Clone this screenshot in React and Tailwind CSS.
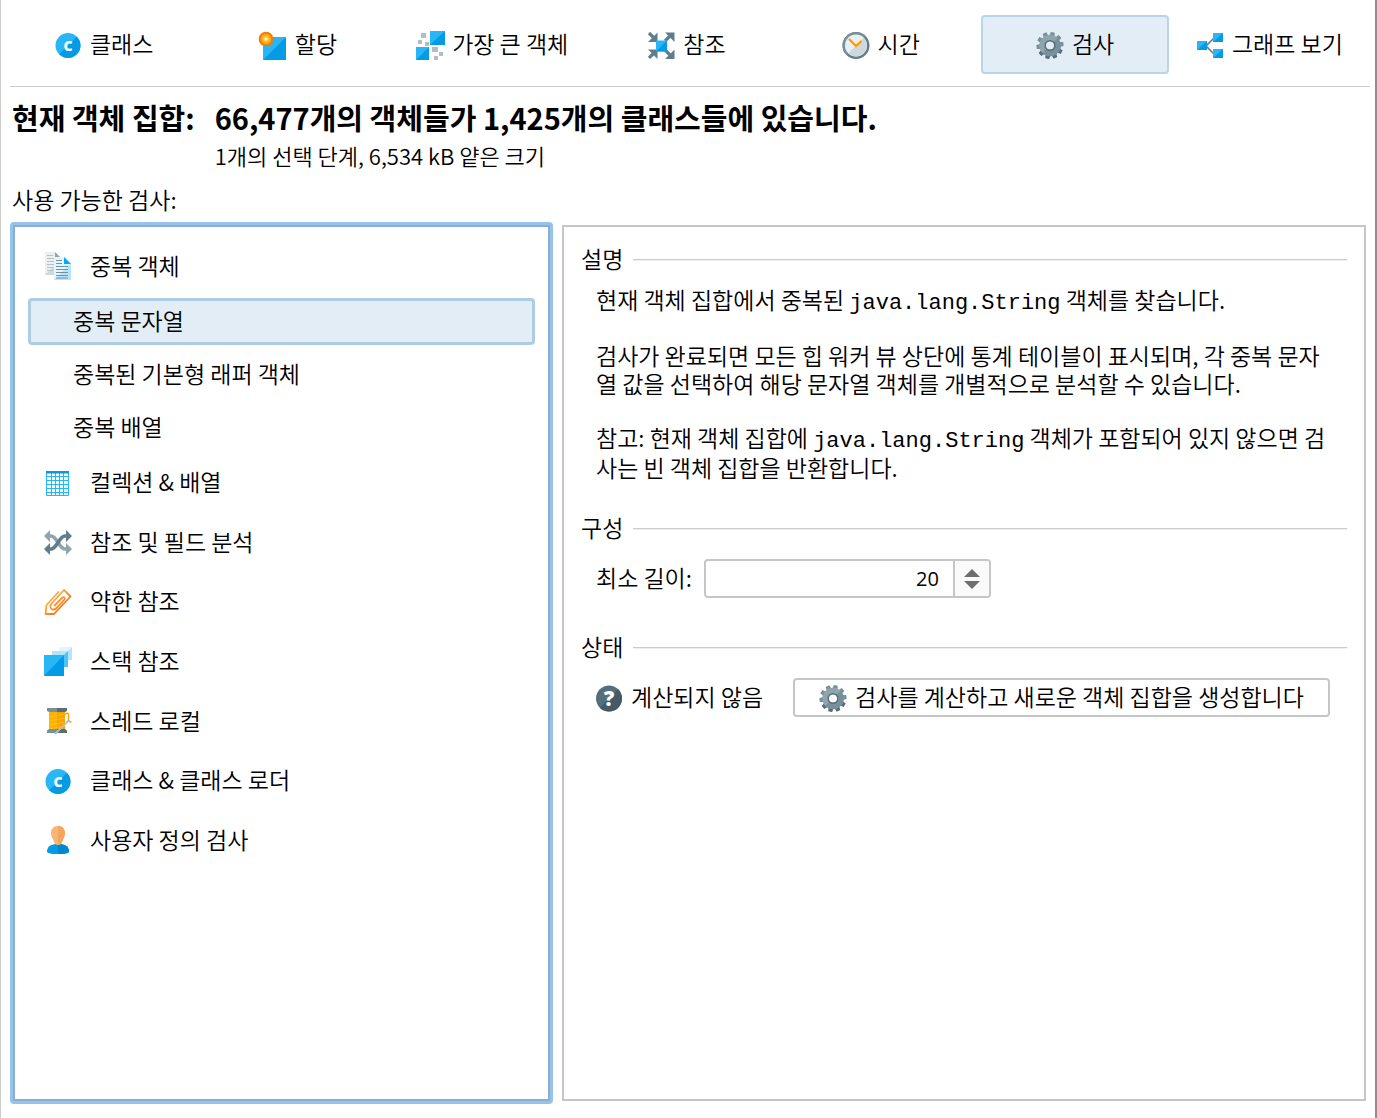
import React, { useState } from 'react';

const ClassIcon = () => (
  <svg className="h-7 w-7 shrink-0" viewBox="0 0 28 28" aria-hidden="true">
    <circle cx="14" cy="14.5" r="12.5" fill="#29b6f6" />
    <path d="M22.84 5.66A12.5 12.5 0 0 1 5.16 23.34z" fill="#039be5" />
    <text x="14" y="19.5" textAnchor="middle" fontFamily="Open Sans, sans-serif" fontWeight="800" fontSize="14" fill="#fff">C</text>
  </svg>
);

const AllocationIcon = () => (
  <svg className="h-7 w-7 shrink-0 overflow-visible" viewBox="0 0 28 28" aria-hidden="true">
    <path d="M4 6h23v23H4z" fill="#29b6f6" />
    <path d="M27 6v23H4z" fill="#039be5" />
    <circle cx="7" cy="8" r="7.3" fill="#f57c00" />
    <circle cx="7" cy="8" r="5.2" fill="#ffa726" />
    <circle cx="7" cy="8" r="3.2" fill="#ffca28" />
    <circle cx="7" cy="8" r="1.6" fill="#fff9c4" />
  </svg>
);

const BiggestIcon = () => (
  <svg className="h-7 w-7 shrink-0 overflow-visible" viewBox="0 0 28 28" aria-hidden="true">
    <path d="M14 0h15v14H14zM0 16h13v13H0z" fill="#29b6f6" />
    <path d="M29 0v14H14zM13 16v13H0z" fill="#039be5" />
    <path d="M5 2h5v5H5zM2 9h4v4H2zM9 11h4v4H9zM16 16h6v5h-6zM23 21h4v4h-4zM18 25h4v4h-4z" fill="#b0bec5" />
  </svg>
);

const ReferencesIcon = () => (
  <svg className="h-7 w-7 shrink-0" viewBox="0 0 28 28" aria-hidden="true">
    <path d="M2 2l6 6M2 27l6-6M18 10l6-6M18 19l6 6" stroke="#607d8b" strokeWidth="3.2" fill="none" />
    <path d="M10.5 1.5V11H1zM1 18.5h9.5V28zM18 1.5h9.5V11zM27.5 18.5V28H18z" fill="#607d8b" />
    <path d="M9 9.5h11v11H9z" fill="#29b6f6" />
    <path d="M20 9.5v11H9z" fill="#039be5" />
  </svg>
);

const ClockIcon = () => (
  <svg className="h-7 w-7 shrink-0" viewBox="0 0 28 28" aria-hidden="true">
    <circle cx="14" cy="14.5" r="13.5" fill="#607d8b" />
    <path d="M4.45 24.05A13.5 13.5 0 0 1 23.55 4.95z" fill="#78909c" />
    <circle cx="14" cy="14.5" r="11" fill="#eceff1" />
    <path d="M21.78 6.72A11 11 0 0 1 6.22 22.28z" fill="#cfd8dc" />
    <path d="M7 8l7 7 5.5-5" fill="none" stroke="#ff9800" strokeWidth="2.2" />
  </svg>
);

// ten blocky teeth around a ring
const teeth = [0, 36, 72, 108, 144, 180, 216, 252, 288, 324];

const GearIcon = () => (
  <svg className="h-7 w-7 shrink-0" viewBox="0 0 28 28" aria-hidden="true">
    {teeth.map((angle) => (
      <path
        key={angle}
        d="M11.3 6L12 1h4l.7 5z"
        fill={angle > 90 && angle < 250 ? '#546e7a' : '#78909c'}
        transform={`rotate(${angle + 12} 14 14.5)`}
      />
    ))}
    <circle cx="14" cy="14.5" r="7.5" fill="none" stroke="#90a4ae" strokeWidth="6.4" />
    <path d="M21.6 6.9A10.7 10.7 0 0 1 6.4 22.1l4.4-4.4A4.5 4.5 0 0 0 17.2 11.3z" fill="#78909c" />
    <circle cx="14" cy="14.5" r="4.8" fill="none" stroke="#546e7a" strokeWidth="1.5" />
  </svg>
);

const GraphIcon = () => (
  <svg className="h-7 w-7 shrink-0" viewBox="0 0 28 28" aria-hidden="true">
    <path d="M19 6l-9 9 9 9" fill="none" stroke="#607d8b" strokeWidth="1.6" />
    <path d="M17 2h10v9H17zM1 10h10v9H1zM17 18h10v9H17z" fill="#29b6f6" />
    <path d="M27 2v9H17zM11 10v9H1zM27 18v9H17z" fill="#039be5" />
  </svg>
);

const DuplicatesIcon = () => (
  <svg className="h-7 w-7 shrink-0" viewBox="0 0 28 28" aria-hidden="true">
    <path d="M1 0h10l5 5v18H1z" fill="#eceff1" />
    <path d="M16 8v15H1z" fill="#cfd8dc" />
    <path d="M11 0l5 5h-5z" fill="#90a4ae" />
    <path d="M3 3.5h6M3 6.5h7M3 9.5h7M3 12.5h7M3 15.5h6M3 18.5h6" stroke="#b8c3c8" />
    <path d="M10 5h11l6 6v17H10z" fill="#e1f5fe" />
    <path d="M27 11v17H10z" fill="#b3e5fc" />
    <path d="M20 5l7 7h-7z" fill="#03a9f4" />
    <path d="M12 8.5h6M12 11.5h6M12 14.5h12M12 17.5h12M12 20.5h12M12 23.5h12M12 26h12" stroke="#78909c" />
  </svg>
);

const TableIcon = () => (
  <svg className="h-7 w-7 shrink-0" viewBox="0 0 28 28" aria-hidden="true">
    <path d="M2 2h23v25H2z" fill="#fff" />
    <path d="M25 10v17H9z" fill="#e1f5fe" />
    <path d="M2.5 2v24.5h22V2M7.5 4v22M11.5 4v22M15.5 4v22M19.5 4v22M3 7.5h22M3 11.5h22M3 15.5h22M3 19.5h22M3 23.5h22" fill="none" stroke="#29b6f6" />
    <path d="M2 2h23v2.5H2z" fill="#039be5" />
  </svg>
);

const ShuffleIcon = () => (
  <svg className="h-7 w-7 shrink-0" viewBox="0 0 28 28" aria-hidden="true">
    <path d="M5 8h2c6 0 8 13 14 13h2" fill="none" stroke="#90a4ae" strokeWidth="3.6" />
    <path d="M5 21h2c6 0 8-13 14-13h2" fill="none" stroke="#607d8b" strokeWidth="3.6" />
    <path d="M0 8l6-6v12zM28 21l-6-6v12z" fill="#90a4ae" />
    <path d="M0 21l6-6v12zM28 8l-6-6v12z" fill="#607d8b" />
  </svg>
);

const ClipIcon = () => (
  <svg className="h-7 w-7 shrink-0" viewBox="0 0 28 28" aria-hidden="true">
    <defs>
      <linearGradient id="clip" x1="0" y1="0" x2="1" y2="1">
        <stop offset=".35" stopColor="#fbab3c" />
        <stop offset=".65" stopColor="#f57c1f" />
      </linearGradient>
    </defs>
    <path d="M14.5 4L2.5 17 1.5 26H10L26.5 8.5 20 2 8 15C5.5 17.5 6 21 8.5 21.5 10 22 11.5 21 12.5 20l8-8.5c1-1.500-.5-3-2-2L10.5 17.5" fill="none" stroke="url(#clip)" strokeWidth="1.8" strokeLinejoin="round" strokeLinecap="round" />
  </svg>
);

const StackIcon = () => (
  <svg className="h-7 w-7 shrink-0 overflow-visible" viewBox="0 0 28 28" aria-hidden="true">
    <path d="M15 0h13v13H15z" fill="#e1f5fe" />
    <path d="M28 0v13H15z" fill="#b3e5fc" />
    <path d="M8 4h16v16H8z" fill="#b3e5fc" />
    <path d="M24 4v16H8z" fill="#4fc3f7" />
    <path d="M0 8h20v21H0z" fill="#29b6f6" />
    <path d="M20 8v21H0z" fill="#039be5" />
  </svg>
);

const SpoolIcon = () => (
  <svg className="h-7 w-7 shrink-0" viewBox="0 0 28 28" aria-hidden="true">
    <path d="M5 4h16v19H5z" fill="#ffb300" />
    <path d="M13 4h8v19h-8z" fill="#ffa000" />
    <path d="M5 10l16-3M5 14l16-3M5 18l16-3M5 22l16-3" stroke="#ffca28" strokeWidth=".7" />
    <path d="M21 7c4-2 4 1 3.500 4s1 4 3 4" fill="none" stroke="#ffa000" strokeWidth="1.5" />
    <path d="M3 1h10v4H5L3 4z" fill="#78909c" />
    <path d="M13 1h10v3l-2 1h-8zM13 22h8l2 1.500V26H13z" fill="#546e7a" />
    <path d="M3 26v-2.500L5 22h8v4z" fill="#78909c" />
    <path d="M11 27L25 13" stroke="#b0bec5" strokeWidth="2" />
  </svg>
);

const UserIcon = () => (
  <svg className="h-7 w-7 shrink-0" viewBox="0 0 28 28" aria-hidden="true">
    <path d="M3 26c0-6 4-8 11-8s11 2 11 8c-3 3-19 3-22 0z" fill="#039be5" />
    <path d="M14 18c7 0 11 2 11 8-1.500 1.500-6 2.200-11 2.200z" fill="#0288d1" />
    <path d="M14 0c5 0 7 3.500 7 7s-2 6-3 9c-1 4-7 4-8 0C9 13 7 10.500 7 7s2-7 7-7z" fill="#f6b579" />
    <path d="M14 0c5 0 7 3.500 7 7s-2 6-3 9c-.5 2-2 3-4 3z" fill="#f5a65b" />
  </svg>
);

const HelpIcon = () => (
  <svg className="h-7 w-7 shrink-0" viewBox="0 0 28 28" aria-hidden="true">
    <circle cx="14" cy="14.5" r="13" fill="#546e7a" />
    <path d="M23.2 5.3A13 13 0 0 1 4.8 23.7z" fill="#455a64" />
    <text x="14" y="22" textAnchor="middle" fontFamily="Open Sans, sans-serif" fontWeight="800" fontSize="21" fill="#fff">?</text>
  </svg>
);

const tabs = [
  { id: 'classes', name: '클래스', Icon: ClassIcon },
  { id: 'allocations', name: '할당', Icon: AllocationIcon },
  { id: 'biggest', name: '가장 큰 객체', Icon: BiggestIcon },
  { id: 'references', name: '참조', Icon: ReferencesIcon },
  { id: 'time', name: '시간', Icon: ClockIcon },
  { id: 'inspections', name: '검사', Icon: GearIcon },
  { id: 'graph', name: '그래프 보기', Icon: GraphIcon },
];

const duplicates = [
  { id: 'strings', name: '중복 문자열' },
  { id: 'wrappers', name: '중복된 기본형 래퍼 객체' },
  { id: 'arrays', name: '중복 배열' },
];

const groups = [
  { id: 'collections', name: '컬렉션 & 배열', Icon: TableIcon },
  { id: 'fields', name: '참조 및 필드 분석', Icon: ShuffleIcon },
  { id: 'weak', name: '약한 참조', Icon: ClipIcon },
  { id: 'stack', name: '스택 참조', Icon: StackIcon },
  { id: 'threads', name: '스레드 로컬', Icon: SpoolIcon },
  { id: 'loaders', name: '클래스 & 클래스 로더', Icon: ClassIcon },
  { id: 'custom', name: '사용자 정의 검사', Icon: UserIcon },
];

const GroupButton = ({ name, Icon }) => (
  <button className="flex h-full w-full items-center gap-[18px] pl-4 text-left">
    <Icon />
    <span className="pb-[3px]">{name}</span>
  </button>
);

const SectionTitle = ({ children }) => (
  <div className="flex items-center gap-[10px]">
    <h2 className="pb-[3px]">{children}</h2>
    <div className="h-[2px] flex-1 border-t border-[#cccccc] bg-[#efefef]" />
  </div>
);

const Code = ({ children }) => (
  <code className="font-['Liberation_Mono',monospace] text-[22px] leading-none font-normal">{children}</code>
);

const App = () => {
  const [activeTab, setActiveTab] = useState('inspections');
  const [inspection, setInspection] = useState('strings');
  const [minLength, setMinLength] = useState(20);

  return (
    <div className="flex min-h-screen flex-col border-r-2 border-l border-r-[#84929e] border-l-[#cccccc] bg-white pb-[14px] font-['Noto_Sans_CJK_KR',sans-serif] text-[23px] leading-7 font-[350] text-black">
      {/* View tabs */}
      <nav className="mr-[5px] ml-[9px] border-b border-[#cccccc] pt-[15px] pb-3">
        <div className="mr-[7px] grid grid-cols-7 gap-[7px]">
          {tabs.map(({ id, name, Icon }) => (
            <button
              key={id}
              onClick={() => setActiveTab(id)}
              className={`flex h-[59px] items-center justify-center gap-2 rounded border-2 whitespace-nowrap ${
                activeTab === id ? 'border-[#b9d5e9] bg-[#e3edf6]' : 'border-transparent'
              }`}
            >
              <Icon />
              <span className="pb-[3px]">{name}</span>
            </button>
          ))}
        </div>
      </nav>

      {/* Current object set */}
      <header className="mt-3 ml-[11px] grid grid-cols-[auto_1fr] gap-x-5 gap-y-[6px]">
        <h1 className="text-[29px] leading-9 font-bold">현재 객체 집합:</h1>
        <p className="text-[29px] leading-9 font-bold">66,477개의 객체들가 1,425개의 클래스들에 있습니다.</p>
        <p className="col-start-2 text-[22px]">1개의 선택 단계, 6,534 kB 얕은 크기</p>
      </header>

      <p className="mt-4 ml-[11px]">사용 가능한 검사:</p>

      <main className="mt-[9px] mr-[9px] ml-[9px] grid flex-1 grid-cols-[543fr_804fr] gap-[9px]">
        {/* Available inspections */}
        <div className="flex rounded border-[3px] border-[#98c2e9]">
          <ul className="flex-1 border-2 border-[#88aed6] px-[13px] pt-[9px]">
            <li>
              <div className="h-[60px]">
                <GroupButton name="중복 객체" Icon={DuplicatesIcon} />
              </div>
              <ul className="flex flex-col gap-[6px] pt-[2px] pb-[2px]">
                {duplicates.map((item) => (
                  <li key={item.id}>
                    <button
                      onClick={() => setInspection(item.id)}
                      className={`h-[47px] w-full rounded border-[3px] pb-[3px] pl-[42px] text-left ${
                        inspection === item.id ? 'border-[#adcde6] bg-[#e3edf6]' : 'border-transparent'
                      }`}
                    >
                      {item.name}
                    </button>
                  </li>
                ))}
              </ul>
            </li>
            <li>
              <ul className="grid h-[417px] grid-rows-7">
                {groups.map(({ id, name, Icon }) => (
                  <li key={id}>
                    <GroupButton name={name} Icon={Icon} />
                  </li>
                ))}
              </ul>
            </li>
          </ul>
        </div>

        {/* Details of the selected inspection */}
        <div className="my-[3px] border-2 border-[#c6c6c6] px-[17px] pt-[17px]">
          <section>
            <SectionTitle>설명</SectionTitle>
            <div className="mt-[10px] pr-4 pl-[15px]">
              <p className="mb-[26px]">
                현재 객체 집합에서 중복된 <Code>java.lang.String</Code> 객체를 찾습니다.
              </p>
              <p className="mb-[26px]">
                검사가 완료되면 모든 힙 워커 뷰 상단에 통계 테이블이 표시되며, 각 중복 문자열 값을 선택하여 해당 문자열 객체를 개별적으로 분석할 수 있습니다.
              </p>
              <p>
                참고: 현재 객체 집합에 <Code>java.lang.String</Code> 객체가 포함되어 있지 않으면 검사는 빈 객체 집합을 반환합니다.
              </p>
            </div>
          </section>

          <section className="mt-8">
            <SectionTitle>구성</SectionTitle>
            <div className="mt-[15px] flex items-center gap-3 pl-[15px]">
              <label htmlFor="min-length" className="pb-[3px]">최소 길이:</label>
              <div className="flex h-[39px] w-[287px] overflow-hidden rounded border-2 border-[#c6c6c6]">
                <input
                  id="min-length"
                  type="text"
                  inputMode="numeric"
                  value={minLength}
                  onChange={(e) => setMinLength(Number(e.target.value) || 0)}
                  className="min-w-0 flex-1 px-[14px] text-right font-['Open_Sans',sans-serif] text-xl font-normal outline-none"
                />
                <div className="flex w-9 flex-col items-center justify-center gap-1 border-l-2 border-[#c6c6c6] bg-[#fafafa]">
                  <button aria-label="늘리기" onClick={() => setMinLength(minLength + 1)}>
                    <svg className="block h-2 w-4" viewBox="0 0 16 8">
                      <path d="M8 0l8 8H0z" fill="#6e6e6e" />
                    </svg>
                  </button>
                  <button aria-label="줄이기" onClick={() => setMinLength(Math.max(0, minLength - 1))}>
                    <svg className="block h-2 w-4" viewBox="0 0 16 8">
                      <path d="M0 0h16L8 8z" fill="#6e6e6e" />
                    </svg>
                  </button>
                </div>
              </div>
            </div>
          </section>

          <section className="mt-[34px]">
            <SectionTitle>상태</SectionTitle>
            <div className="mt-[15px] flex items-center gap-[30px] pl-[14px] whitespace-nowrap">
              <div className="flex items-center gap-2">
                <HelpIcon />
                <span className="pb-[3px]">계산되지 않음</span>
              </div>
              <button className="flex h-[39px] items-center gap-2 rounded border-2 border-[#c6c6c6] px-6">
                <GearIcon />
                <span className="pb-[3px]">검사를 계산하고 새로운 객체 집합을 생성합니다</span>
              </button>
            </div>
          </section>
        </div>
      </main>
    </div>
  );
};

export default App;
